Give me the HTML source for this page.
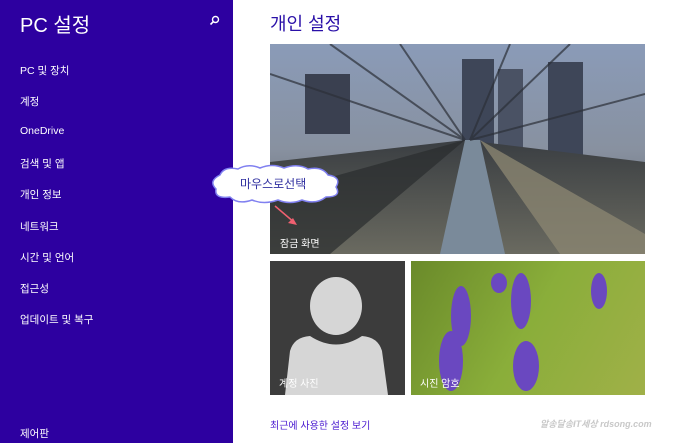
<!DOCTYPE html>
<html><head><meta charset="utf-8"><style>
*{margin:0;padding:0;box-sizing:border-box}
body{width:680px;height:443px;overflow:hidden;background:#fff;font-family:"Liberation Sans","Noto Sans CJK KR",sans-serif;position:relative}
#side{position:absolute;left:0;top:0;width:233px;height:443px;background:#2d00a0;color:#fff}
#side h1{position:absolute;left:20px;top:9px;font-size:20px;font-weight:normal}
#side .it{position:absolute;left:20px;font-size:10.5px}
.t{position:absolute;overflow:hidden}
.lab{position:absolute;color:#fff;font-size:10px}
</style></head><body>
<div id="side">
<h1>PC 설정</h1>
<svg style="position:absolute;left:209px;top:15px" width="11" height="11" viewBox="0 0 11 11"><circle cx="6.5" cy="4.5" r="3" fill="none" stroke="#fff" stroke-width="1.4"/><path d="M4.4 6.6L1.5 9.5" stroke="#fff" stroke-width="1.6"/></svg>
<div class="it" style="top:63px">PC 및 장치</div>
<div class="it" style="top:94px">계정</div>
<div class="it" style="top:125px">OneDrive</div>
<div class="it" style="top:156px">검색 및 앱</div>
<div class="it" style="top:187px">개인 정보</div>
<div class="it" style="top:219px">네트워크</div>
<div class="it" style="top:250px">시간 및 언어</div>
<div class="it" style="top:281px">접근성</div>
<div class="it" style="top:312px">업데이트 및 복구</div>
<div class="it" style="top:426px">제어판</div>
</div>
<div style="position:absolute;left:270px;top:10px;font-size:18px;color:#2a10a8">개인 설정</div>
<div class="t" style="left:270px;top:44px;width:375px;height:210px">
<svg width="375" height="210" viewBox="0 0 375 210">
<defs><linearGradient id="sk" x1="0" y1="0" x2="0" y2="1"><stop offset="0" stop-color="#8a9bb8"/><stop offset="0.5" stop-color="#8891a0"/><stop offset="1" stop-color="#5a5e62"/></linearGradient>
<linearGradient id="gr" x1="0" y1="0" x2="0" y2="1"><stop offset="0" stop-color="#3a3e42"/><stop offset="1" stop-color="#6a6a60"/></linearGradient></defs>
<rect width="375" height="210" fill="url(#sk)"/>
<rect x="35" y="30" width="45" height="60" fill="#3a4050"/>
<rect x="192" y="15" width="32" height="90" fill="#3e4658"/>
<rect x="228" y="25" width="25" height="80" fill="#4a5264"/>
<rect x="278" y="18" width="35" height="100" fill="#3e4658"/>
<polygon points="0,118 195,96 375,118 375,210 0,210" fill="url(#gr)"/>
<polygon points="0,150 195,96 60,210 0,210" fill="#2a2c2e" opacity=".7"/>
<polygon points="195,96 210,96 235,210 170,210" fill="#7a8a9a"/>
<polygon points="210,96 375,190 375,210 290,210" fill="#8a8470" opacity=".8"/>
<g stroke="#2c3038" stroke-width="2" opacity=".7"><line x1="0" y1="30" x2="195" y2="96"/><line x1="60" y1="0" x2="195" y2="96"/><line x1="130" y1="0" x2="195" y2="96"/><line x1="375" y1="50" x2="200" y2="96"/><line x1="300" y1="0" x2="200" y2="96"/><line x1="240" y1="0" x2="200" y2="96"/></g>
</svg>
<div class="lab" style="left:10px;top:191px">잠금 화면</div>
<svg style="position:absolute;left:3px;top:160px" width="30" height="25"><line x1="2" y1="2" x2="22" y2="19" stroke="#f06070" stroke-width="1.5"/><polygon points="24,21 15,19 20,14" fill="#f06070"/></svg>
</div>
<svg style="position:absolute;left:208px;top:163px" width="136" height="42" viewBox="0 0 136 42"><path d="M12 12 Q16 3 30 6 Q40 0 52 5 Q64 0 76 5 Q90 0 100 6 Q114 3 120 12 Q134 14 128 24 Q134 34 118 34 Q108 42 94 37 Q82 42 70 37 Q56 42 44 37 Q30 42 22 34 Q6 36 8 26 Q0 18 12 12Z" fill="#fff" stroke="#8080f0" stroke-width="1.5"/><text x="32" y="25" font-size="12" fill="#3030a0" font-family="Liberation Sans,Noto Sans CJK KR,sans-serif">마우스로선택</text></svg>
<div class="t" style="left:270px;top:261px;width:135px;height:134px;background:#3c3c3c">
<svg width="135" height="134"><ellipse cx="66" cy="45" rx="26" ry="29" fill="#d6d6d6"/><path d="M15 134 L20 90 Q24 76 40 75 Q66 92 92 75 Q108 76 112 90 L118 134Z" fill="#d6d6d6"/></svg>
<div class="lab" style="left:9px;top:114px">계정 사진</div>
</div>
<div class="t" style="left:411px;top:261px;width:234px;height:134px;background:linear-gradient(120deg,#6a8a2a,#8aae3a 50%,#a0b048)">
<svg width="234" height="134"><g fill="#6a48c0"><ellipse cx="50" cy="55" rx="10" ry="30"/><ellipse cx="110" cy="40" rx="10" ry="28"/><ellipse cx="40" cy="100" rx="12" ry="30"/><ellipse cx="115" cy="105" rx="13" ry="25"/><ellipse cx="88" cy="22" rx="8" ry="10"/><ellipse cx="188" cy="30" rx="8" ry="18"/></g></svg>
<div class="lab" style="left:9px;top:114px">시진 암호</div>
</div>
<div style="position:absolute;left:270px;top:417px;font-size:10px;color:#4a1ad0">최근에 사용한 설정 보기</div>
<div style="position:absolute;left:540px;top:417px;font-size:9px;color:#c8c8c8;font-style:italic;font-weight:bold">알송달송IT세상 rdsong.com</div>
</body></html>
